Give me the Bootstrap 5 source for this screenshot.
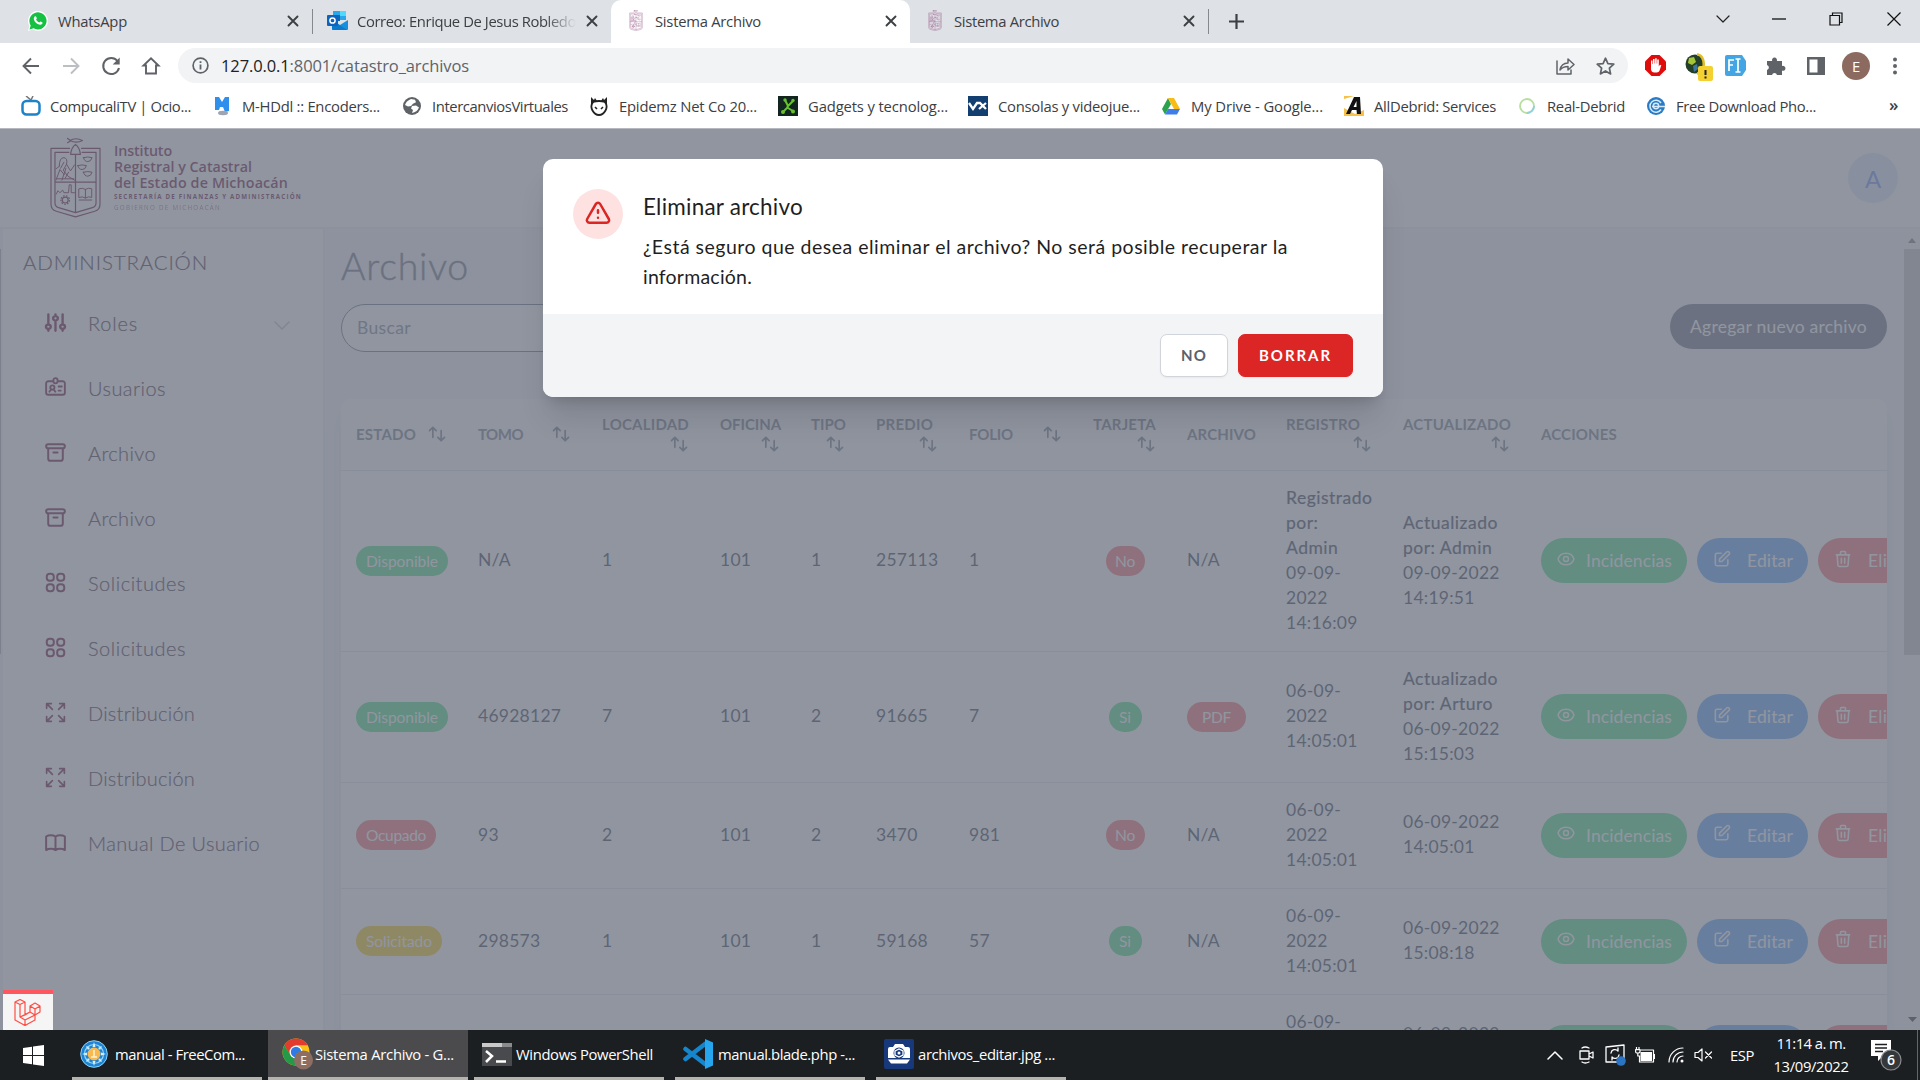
<!DOCTYPE html>
<html lang="es">
<head>
<meta charset="utf-8">
<title>Sistema Archivo</title>
<link href="https://cdn.jsdelivr.net/npm/bootstrap@5.3.0/dist/css/bootstrap.min.css" rel="stylesheet">
<style>
  :root { --ui: "Open Sans", "Noto Sans", sans-serif; --app: Lato, "Open Sans", sans-serif; --rojo: #6e1240; }
  body { width: 1920px; height: 1080px; overflow: hidden; background: #fff; font-family: var(--ui); font-size: 14.8px; line-height: 20px; color: #3c4043; }
  svg { flex: none; display: block; }
  [data-w] { white-space: nowrap; display: inline-block; flex: none; }
  .slot { flex: none; display: flex; align-items: center; }
  .ln { fill: none; stroke: currentColor; stroke-linecap: round; stroke-linejoin: round; }

  /* browser chrome */
  .tabstrip { height: 43px; background: #dee1e6; color: #3c4043; }
  .tabstrip .tab-item { height: 43px; padding-bottom: 2px; flex: none; display: flex; align-items: center; position: relative; }
  .tab-item.current { background: #fff; border-radius: 10px 10px 0 0; }
  .tab-sep { width: 1px; height: 25px; background: #85898e; flex: none; }
  .fade-end { -webkit-mask-image: linear-gradient(90deg, #000 86%, transparent); mask-image: linear-gradient(90deg, #000 86%, transparent); overflow: hidden; }
  .toolbar { height: 45px; color: #5f6368; }
  .omnibox { width: 1450px; height: 35px; border-radius: 18px; background: #f1f3f4; font-size: 16.5px; color: #606469; }
  .omnibox b { font-weight: 400; color: #202124; }
  .bookmarks { height: 41px; border-bottom: 1px solid #b5b8bf; padding-bottom: 4px; }

  /* web application */
  .viewport { height: 901px; font-family: var(--app); font-size: 17.5px; line-height: 25px; color: #374151; background: #f3f4f6; position: relative; overflow: hidden; }
  .app-header { height: 100px; background: #fff; border-bottom: 2px solid #eceef1; padding-left: 50px; color: var(--rojo); }
  .brand-lines { font-family: "Open Sans", sans-serif; font-weight: 600; font-size: 14.3px; line-height: 16px; }
  .tiny-a { font-size: 6.2px; line-height: 12px; font-weight: 700; }
  .tiny-b { font-size: 6.2px; line-height: 10px; font-weight: 400; opacity: .6; }
  .user-dot { width: 50px; height: 50px; background: #dfecff; color: #6f8ff0; font-size: 24px; }
  .sidebar { width: 322px; margin-left: 3px; background: #fff; border-right: 2px solid #eceef1; padding: 21px 0 0 20px; color: #452a3c; font-weight: 300; font-size: 20px; -webkit-text-stroke: .2px currentColor; }
  .side-item { height: 65px; }
  .side-item svg { color: var(--rojo); margin: -3px 20px 0 0; }
  .side-list { padding: 16px 0 0 20px; }
  .page-body { width: 1579px; padding: 14px 17px 0 16px; flex: none; }
  .page-title { font-size: 37.5px; line-height: 45px; color: #6b7280; font-weight: 300; height: 61px; margin: 0; -webkit-text-stroke: .5px currentColor; }
  .search-pill { width: 420px; height: 48px; border: 1px solid #6b7280; background: #fff; padding: 0 15px 2px; color: #7d838e; }
  .add-pill { width: 217px; height: 45px; background: #6b7280; color: #fff; padding-bottom: 1px; }
  .sheet { margin-top: 47px; width: 1546px; background: #fff; border-radius: 10px 10px 0 0; overflow: hidden; box-shadow: 0 12px 19px -4px rgba(0,0,0,.1); }
  .sheet table { width: 1720px; table-layout: fixed; border-collapse: collapse; }
  .sheet th { height: 71px; padding: 0 15px 1px; background: #f9fafb; font-size: 15px; line-height: 20px; font-weight: 700; color: #757c89; border-bottom: 1px solid #dfe2e6; vertical-align: middle; }
  .sheet td { padding: 15px; border-bottom: 1px solid #e2e4e8; vertical-align: middle; white-space: nowrap; }
  .sheet td.plain { padding: 14px 15px 16px; letter-spacing: .25px; }
  .strong-txt { -webkit-text-stroke: .22px currentColor; letter-spacing: .5px; }
  .pill { display: inline-flex; align-items: center; justify-content: center; height: 30px; border-radius: 15px; color: #fff; font-size: 15.5px; line-height: 22px; vertical-align: middle; }
  .g { background: #4ade80; } .r { background: #f87171; } .y { background: #facc15; } .b { background: #60a5fa; }
  .act { height: 45px; border-radius: 23px; color: #fff; flex: none; display: flex; align-items: center; }
  .act svg { margin-top: -4px; }
  .track { width: 16px; background: #f1f1f1; color: #505050; }
  .thumb { height: 406px; background: #c1c1c1; }
  .veil { position: absolute; inset: 0; background: rgba(107,114,128,.75); }
  .dialog-box { position: absolute; left: 543px; top: 30px; width: 840px; height: 238px; border-radius: 10px; background: #fff; overflow: hidden; color: #1f1f1f; }
  .dialog-shadow { position: absolute; left: 543px; top: 30px; width: 840px; height: 238px; border-radius: 10px; box-shadow: 0 25px 31px -6px rgba(0,0,0,.12), 0 10px 12px -6px rgba(0,0,0,.12); }
  .dialog-main { height: 155px; padding: 30px; gap: 20px; }
  .warn-dot { width: 50px; height: 50px; background: #fee2e2; color: #dc2626; }
  .dialog-foot { height: 83px; background: #f3f4f6; padding: 0 30px; gap: 10px; }
  .dlg-btn { height: 43px; border-radius: 7px; font-size: 15px; font-weight: 700; border: 1px solid #d1d5db; background: #fff; color: #59616e; display: flex; align-items: center; justify-content: center; box-shadow: 0 1px 2px rgba(0,0,0,.05); }
  .dlg-btn.danger { background: #dc2626; border-color: #dc2626; color: #fff; }
  .debug-tab { position: absolute; left: 3px; bottom: 0; width: 50px; height: 40px; background: #f5f5f5; border-top: 4px solid #ff5660; padding-right: 2px; }
  .left-line { position: absolute; left: 0; top: 120px; width: 1px; height: 405px; background: #7b808b; }

  /* taskbar */
  .taskbar { height: 50px; background: #1c1f22; color: #fff; }
  .task { height: 50px; border-bottom: 3px solid #b5b3ae; padding-top: 1px; flex: none; display: flex; align-items: center; }
  .task.on { background: #4b4b4e; }
</style>
</head>
<body>
<svg width="0" height="0" class="position-absolute">
  <symbol id="x" viewBox="0 0 12 12"><path class="ln" stroke-width="1.9" d="M1.5 1.5l9 9m0-9l-9 9"/></symbol>
  <symbol id="crest" viewBox="148 36 154 244"><g class="ln" stroke-width="3.6"><path d="M207 70H151V238Q151 256 167 260L225 277L283 260Q299 256 299 238V70H243M205 82H163V234Q163 246 174 249L225 264L276 249Q287 246 287 234V82H245M225 90V262M163 172H287M210 88H240Q237 66 225 58Q213 66 210 88ZM201 40L211 47L201 53M208 46Q226 36 246 46Q228 56 208 46Z"/><path stroke-width="3" d="M249 98q13-4 26 0q-3 12-13 12t-13-12zM232 122q13-4 26 0q-3 12-13 12t-13-12zM249 142q13-4 26 0q-3 12-13 12t-13-12zM166 166L178 134L190 148L184 166M176 124Q176 98 190 98Q202 100 198 118L188 136L202 154L222 166M198 118L210 138L222 120M190 112L180 130M196 130L190 150M204 142L194 160M166 132l10-8M170 162h50M167 208L172 198l6 6l8-8l4 8h14l2-24h6v24h10M236 192q10-4 19 2q9-6 19-2v26q-10-4-19 2q-9-6-19-2zM255 194v26M236 226h38"/><circle cx="194" cy="226" r="9"/><path stroke-dasharray="2 7" d="M181 226a13 13 0 1 0 26 0a13 13 0 1 0-26 0"/></g></symbol>
  <symbol id="sort" viewBox="0 0 24 24"><path class="ln" stroke-width="2" d="M7 16V4m0 0L3 8m4-4l4 4m6 0v12m0 0l4-4m-4 4l-4-4"/></symbol>
  <symbol id="sliders" viewBox="0 0 24 24"><path class="ln" stroke-width="2" d="M12 6V4m0 2a2 2 0 100 4m0-4a2 2 0 110 4m-6 8a2 2 0 100-4m0 4a2 2 0 110-4m0 4v2m0-6V4m6 6v10m6-2a2 2 0 100-4m0 4a2 2 0 110-4m0 4v2m0-6V4" transform="translate(-1.7 0) scale(1.14 1)"/></symbol>
  <symbol id="ident" viewBox="0 0 24 24"><path class="ln" stroke-width="1.8" d="M10 6H5a2 2 0 00-2 2v9a2 2 0 002 2h14a2 2 0 002-2V8a2 2 0 00-2-2h-5m-4 0V5a2 2 0 114 0v1m-4 0a2 2 0 104 0m-5 8a2 2 0 100-4 2 2 0 000 4zm0 0c1.306 0 2.417.835 2.83 2M9 14a3.001 3.001 0 00-2.83 2M15 11h3m-3 4h2"/></symbol>
  <symbol id="box" viewBox="0 0 24 24"><path class="ln" stroke-width="1.9" d="M5 8h14M5 8a2 2 0 110-4h14a2 2 0 110 4M5 8v10a2 2 0 002 2h10a2 2 0 002-2V8m-9 4h4"/></symbol>
  <symbol id="dots4" viewBox="0 0 24 24"><g class="ln" stroke-width="1.9"><rect x="3.6" y="3.6" width="6.8" height="6.8" rx="2.9"/><rect x="13.6" y="3.6" width="6.8" height="6.8" rx="2.9"/><rect x="3.6" y="13.6" width="6.8" height="6.8" rx="2.9"/><rect x="13.6" y="13.6" width="6.8" height="6.8" rx="2.9"/></g></symbol>
  <symbol id="expand" viewBox="0 0 24 24"><path class="ln" stroke-width="1.6" d="M3.5 8V3.5H8M3.5 3.5l5.5 5.5M20.500 8V3.500H16M20.500 3.500L15 9M3.500 16v4.500H8M3.500 20.500L9 15M20.500 16v4.500H16M20.500 20.500L15 15"/></symbol>
  <symbol id="book" viewBox="0 0 24 24"><path class="ln" stroke-width="1.9" d="M12 6.253v13m0-13C10.832 5.477 9.246 5 7.5 5S4.168 5.477 3 6.253v13C4.168 18.477 5.754 18 7.5 18s3.332.477 4.500 1.253m0-13C13.168 5.477 14.754 5 16.500 5c1.747 0 3.332.477 4.500 1.253v13C19.832 18.477 18.247 18 16.500 18c-1.746 0-3.332.477-4.500 1.253"/></symbol>
  <symbol id="eye" viewBox="0 0 24 24"><path class="ln" stroke-width="1.8" d="M15 12a3 3 0 11-6 0 3 3 0 016 0zM2.458 12C3.732 7.943 7.523 5 12 5c4.478 0 8.268 2.943 9.542 7-1.274 4.057-5.064 7-9.542 7-4.477 0-8.268-2.943-9.542-7z"/></symbol>
  <symbol id="edit" viewBox="0 0 24 24"><path class="ln" stroke-width="1.900" d="M11 5H6a2 2 0 00-2 2v11a2 2 0 002 2h11a2 2 0 002-2v-5m-1.414-9.414a2 2 0 112.828 2.828L11.828 15H9v-2.828l8.586-8.586z"/></symbol>
  <symbol id="trash" viewBox="0 0 24 24"><path class="ln" stroke-width="1.900" d="M19 7l-.867 12.142A2 2 0 0116.138 21H7.862a2 2 0 01-1.995-1.858L5 7m5 4v6m4-6v6m1-10V4a1 1 0 00-1-1h-4a1 1 0 00-1 1v3M4 7h16"/></symbol>
</svg>

<!-- tab strip -->
<div class="tabstrip d-flex align-items-start">
  <div class="tab-item" style="width:312px">
    <div class="slot" style="width:58px;padding-left:28px"><svg width="20" height="20" viewBox="0 0 20 20"><path fill="#fff" d="M0 20l1.400-5A10 10 0 1 1 5 18.600z"/><path fill="#15c143" d="M1.500 18.500l1.200-4A8.600 8.600 0 1 1 5.600 17.300z"/><path fill="#fff" d="M7 5.300c.6-.3 1 0 1.200.5l.6 1.400c.1.400-.6 1-.7 1.300.6 1.300 1.800 2.400 3.200 3 .5-.1.900-1.100 1.300-1l1.600.8c.5.300.3 1.200-.1 1.700-1 1.100-2.700.9-4.400 0C7.500 11.800 6 9.700 5.800 8c0-1.200.5-2.300 1.200-2.700z"/></svg></div>
    <span data-w="69">WhatsApp</span>
    <div class="slot ms-auto" style="width:25px"><svg width="12" height="12"><use href="#x"/></svg></div>
  </div>
  <div class="slot" style="height:42px"><div class="tab-sep"></div></div>
  <div class="tab-item" style="width:298px">
    <div class="slot" style="width:44px;padding-left:14px"><svg width="21" height="19" viewBox="0 0 21 19"><path fill="#28a8ea" d="M6 0h13v9H6z"/><path fill="#1066b5" d="M6 4h7v6H6z"/><path fill="#50d9ff" d="M13 0h6v5h-6z"/><path fill="#1490df" d="M5 9l8 5 8-5v9a1 1 0 0 1-1 1H6a1 1 0 0 1-1-1z"/><path fill="#0364b8" d="M5 9l15 10H6a1 1 0 0 1-1-1z" opacity=".5"/><rect y="4" width="11" height="11" rx="1" fill="#0a64c0"/><circle cx="5.500" cy="9.500" r="2.600" fill="none" stroke="#fff" stroke-width="1.500"/></svg></div>
    <span class="fade-end" data-w="219">Correo: Enrique De Jesus Robledo</span>
    <div class="slot ms-auto" style="width:25px"><svg width="12" height="12"><use href="#x"/></svg></div>
  </div>
  <div class="tab-item current" style="width:299px">
    <div class="slot" style="width:44px;padding-left:18px;color:#8f4a7c"><svg width="14" height="21"><use href="#crest"/></svg></div>
    <span data-w="106">Sistema Archivo</span>
    <div class="slot ms-auto" style="width:25px"><svg width="12" height="12"><use href="#x"/></svg></div>
  </div>
  <div class="tab-item" style="width:298px">
    <div class="slot" style="width:44px;padding-left:18px;color:#8f4a7c"><svg width="14" height="21"><use href="#crest"/></svg></div>
    <span data-w="105">Sistema Archivo</span>
    <div class="slot ms-auto" style="width:25px"><svg width="12" height="12"><use href="#x"/></svg></div>
  </div>
  <div class="slot" style="height:42px"><div class="tab-sep"></div></div>
  <div class="slot" style="height:42px;padding-left:20px"><svg width="15" height="15" viewBox="0 0 15 15"><path d="M7.500 0v15M0 7.500h15" stroke="#3c4043" stroke-width="2.200"/></svg></div>
  <div class="d-flex ms-auto align-items-center" style="height:37px;padding-right:19px;color:#222">
    <div class="slot" style="width:56px"><svg width="14" height="8" viewBox="0 0 14 8"><path class="ln" stroke-width="1.200" d="M1 1l6 6 6-6"/></svg></div>
    <div class="slot" style="width:57px"><svg width="14" height="2"><path d="M0 1h14" stroke="#111" stroke-width="1.300"/></svg></div>
    <div class="slot" style="width:58px"><svg width="14" height="14" viewBox="0 0 14 14"><path fill="none" stroke="#111" stroke-width="1.200" d="M1 3.500h9.500V13H1zM3.500 3.500V1H13v9.500h-2.500"/></svg></div>
    <div class="slot"><svg width="14" height="14" viewBox="0 0 14 14"><path stroke="#111" stroke-width="1.200" d="M.5 .5l13 13M13.500 .5l-13 13"/></svg></div>
  </div>
</div>

<!-- toolbar -->
<div class="toolbar d-flex align-items-center">
  <div class="slot" style="width:178px;padding-left:21px;gap:20px">
    <svg width="20" height="20" viewBox="0 0 20 20"><path fill="none" stroke="#5f6368" stroke-width="1.900" d="M18 10H3M10 2.500L2.500 10l7.500 7.500"/></svg>
    <svg width="20" height="20" viewBox="0 0 20 20"><path fill="none" stroke="#bcbec1" stroke-width="1.900" d="M2 10h15M10 2.500l7.500 7.500-7.500 7.500"/></svg>
    <svg width="20" height="20" viewBox="0 0 20 20"><path fill="none" stroke="#5f6368" stroke-width="2" d="M16.500 5A8 8 0 1 0 18 12"/><path fill="#5f6368" d="M18.700 1.500v7h-7z"/></svg>
    <svg width="20" height="20" viewBox="0 0 20 20"><path fill="none" stroke="#5f6368" stroke-width="1.900" d="M5 17.500V9.500H2.500L10 2.300l7.500 7.200H15v8z"/></svg>
  </div>
  <div class="omnibox d-flex align-items-center">
    <div class="slot" style="width:43px;padding-left:14px"><svg width="17" height="17" viewBox="0 0 17 17"><circle cx="8.500" cy="8.500" r="7.400" fill="none" stroke="#5f6368" stroke-width="1.700"/><path stroke="#5f6368" stroke-width="1.800" d="M8.500 7.500v5M8.500 4.300v1.800"/></svg></div>
    <span data-w="248"><b>127.0.0.1</b>:8001/catastro_archivos</span>
    <div class="slot ms-auto" style="padding-right:13px;gap:21px">
      <svg width="19" height="18" viewBox="0 0 19 18"><path class="ln" stroke-width="1.500" d="M1 4v13h14v-4M4 13c1-5 4-7 8-7V2l6 5.500-6 5.500V9.500c-4 0-6 1-8 3.500z"/></svg>
      <svg width="19" height="18" viewBox="0 0 19 18"><path class="ln" stroke-width="1.700" d="M9.500 1.200l2.400 5.400 5.900.6-4.400 4 1.200 5.700-5.100-3-5.100 3 1.200-5.700-4.400-4 5.900-.6z"/></svg>
    </div>
  </div>
  <div class="d-flex align-items-center" style="padding-left:17px">
    <div class="slot" style="width:40px"><svg width="21" height="21" viewBox="0 0 21 21"><path fill="#e00b0b" d="M6.500 0h8L21 6.500v8L14.500 21h-8L0 14.500v-8z"/><path fill="#fff" d="M6 10.500V5.600h1.500V9h.5V4h1.600v4.500h.5V3.300h1.600v5.200h.5V4.400h1.600v7.100l1-1.800 1.500.6-1.800 5.500q-.7 1.700-2.700 1.700h-2.500q-2.800 0-3.300-3z"/></svg></div>
    <div class="slot" style="width:40px"><svg width="28" height="30" viewBox="0 0 28 30"><circle cx="10" cy="13" r="9.500" fill="#243f27"/><path d="M12 3.500c9 0 9 19 0 19" fill="none" stroke="#e1bd2a" stroke-width="2.500"/><path fill="#a5c63a" d="M4 7l5-1 2 5-4 3-4-2z"/><path fill="#3d77a1" d="M8 15l4-2 1 5-4 3z"/><rect x="13" y="15" width="15" height="15" rx="2" fill="#f4d030"/><path d="M20.500 19v5M20.500 25.500v2" stroke="#222" stroke-width="2"/></svg></div>
    <div class="slot" style="width:41px"><svg width="21" height="21" viewBox="0 0 21 21"><path fill="#43a5e3" d="M2 0h15l4 6v9l-4 6H2q-2 0-2-2V2q0-2 2-2z"/><path fill="none" stroke="#fff" stroke-width="1.700" d="M4 16V5h5M4 10h4M10.500 4h5M10.500 17h5M13 4v13"/></svg></div>
    <div class="slot" style="width:41px"><svg width="20" height="19" viewBox="0 0 20 19"><path fill="#5f6368" d="M1 5h5.200a2.500 2.500 0 1 1 4.600 0H16v5a2.500 2.500 0 1 1 0 4.600V19h-5a2.600 2.600 0 0 0-5 0H1v-5a2.600 2.600 0 0 0 0-5z"/></svg></div>
    <div class="slot" style="width:35px"><svg width="18" height="18" viewBox="0 0 18 18"><path fill="#5f6368" fill-rule="evenodd" d="M0 0h18v18H0zM2.500 2.500v13h8v-13z"/></svg></div>
    <div class="slot justify-content-center rounded-circle text-white" style="width:28px;height:28px;background:#8d6a60">E</div>
    <div class="slot" style="padding-left:23px"><svg width="4" height="18" fill="#5f6368"><circle cx="2" cy="2.500" r="2"/><circle cx="2" cy="9" r="2"/><circle cx="2" cy="15.500" r="2"/></svg></div>
  </div>
</div>

<!-- bookmarks -->
<div class="bookmarks d-flex align-items-center" style="padding-left:21px">
  <div class="slot" style="width:194px"><div class="slot" style="width:29px"><svg width="20" height="20" viewBox="0 0 20 20"><path d="M5 0l5 4 2-4" fill="none" stroke="#777" stroke-width="1.500"/><rect x="1.500" y="5" width="17" height="13.500" rx="4" fill="#fff" stroke="#1d83c9" stroke-width="2.500"/></svg></div><span data-w="141">CompucaliTV | Ocio...</span></div>
  <div class="slot" style="width:188px"><div class="slot" style="width:27px"><svg width="14" height="20" viewBox="0 0 14 20"><path fill="#2e8fec" d="M0 1l4 0 3 5 3-5h4v14l-4 1-2-5H5l-1 3H0z"/><ellipse cx="8" cy="17" rx="5" ry="2.200" fill="#9da5b3"/></svg></div><span data-w="138">M-HDdl :: Encoders...</span></div>
  <div class="slot" style="width:187px"><div class="slot" style="width:29px"><svg width="18" height="18" viewBox="0 0 18 18"><circle cx="9" cy="9" r="9" fill="#5f6368"/><path fill="#fff" d="M8 2l4 .8 1 2.500-3 1.500-2 2.200-3 .5L2 8Q3 4 8 2zM9 9l4-.5 3 2Q14 15 9 16l1-3-2-1.500z"/></svg></div><span data-w="136">IntercanviosVirtuales</span></div>
  <div class="slot" style="width:188px"><div class="slot" style="width:29px"><svg width="18" height="19" viewBox="0 0 18 19"><path fill="#fff" stroke="#222" stroke-width="1.800" d="M3 5Q0 9 2.500 13.500Q5 18 9 18t6.500-4.500Q18 9 15 5Q9 3 3 5z"/><path fill="#222" d="M1 0l3 3 1-2 2 3h4l2-3 1 2 3-3 0 9-3-4H4L1 9z"/><path stroke="#222" stroke-width="1.600" d="M5 10l2 2M13 10l-2 2"/></svg></div><span data-w="138">Epidemz Net Co 20...</span></div>
  <div class="slot" style="width:190px"><div class="slot" style="width:30px"><svg width="20" height="20" viewBox="0 0 20 20"><path fill="#12261f" d="M0 0h20v20H0z"/><path fill="none" stroke="#67c22f" stroke-width="2" d="M7 4l3 6 5-5M10 10l-1 2-4 4M10 12l5 3"/><g fill="#67c22f"><circle cx="7" cy="4" r="1.700"/><circle cx="15" cy="4.500" r="1.700"/><circle cx="5" cy="16" r="2"/><circle cx="15" cy="15.500" r="2"/></g></svg></div><span data-w="140">Gadgets y tecnolog...</span></div>
  <div class="slot" style="width:194px"><div class="slot" style="width:30px"><svg width="20" height="20" viewBox="0 0 20 20"><path fill="#123f70" d="M0 0h20v20H0z"/><path fill="none" stroke="#fff" stroke-width="2.300" d="M1 7l4 6 4-6h3l6 6M18 7l-7 6"/></svg></div><span data-w="142">Consolas y videojue...</span></div>
  <div class="slot" style="width:182px"><div class="slot" style="width:29px"><svg width="18" height="17" viewBox="0 0 18 17"><path fill="#2ba24c" d="M6 0L0 11l3 5.500L9 6z"/><path fill="#f9bc15" d="M6 0h6l6 11h-6z"/><path fill="#3f7ee8" d="M3 16.500L6 11h12l-3 5.500z"/></svg></div><span data-w="132">My Drive - Google...</span></div>
  <div class="slot" style="width:175px"><div class="slot" style="width:30px"><svg width="20" height="20" viewBox="0 0 20 20"><path fill="#f3c14c" d="M0 0h20v20H0z"/><path fill="#fff" d="M0 3l10-3h10v14l-9 4L0 12z"/><path fill="#111" d="M2 18L10 1h6l1 17h-4l-.5-4H8l-2 4zM9.500 11h3V5z"/></svg></div><span data-w="122">AllDebrid: Services</span></div>
  <div class="slot" style="width:127px"><div class="slot" style="width:28px"><svg width="16" height="18" viewBox="0 0 16 18"><circle cx="8" cy="9" r="7" fill="none" stroke="#b7dfa1" stroke-width="1.800"/><path d="M8 16a7 7 0 0 0 7-7" fill="none" stroke="#8ed0df" stroke-width="1.800"/></svg></div><span data-w="78">Real-Debrid</span></div>
  <div class="slot" style="width:243px"><div class="slot" style="width:30px"><svg width="20" height="18" viewBox="0 0 20 18"><circle cx="10" cy="9" r="9" fill="#2a7bc5"/><path fill="none" stroke="#d5ebfa" stroke-width="1.500" d="M15 6a6 6 0 1 0 0 6.500M6 9.500h13"/><circle cx="10" cy="9" r="2.700" fill="none" stroke="#d5ebfa" stroke-width="1.500"/></svg></div><span data-w="140">Free Download Pho...</span></div>
  <span class="fw-semibold" style="font-size:17px;margin-top:-3px">»</span>
</div>

<!-- web page -->
<div class="viewport">
  <header class="app-header d-flex align-items-center">
    <svg width="51" height="81" style="margin-top:-2px"><use href="#crest"/></svg>
    <div class="brand-lines" style="padding-left:13px">
      <div><span data-w="58">Instituto</span></div><div><span data-w="138">Registral y Catastral</span></div><div><span data-w="174">del Estado de Michoacán</span></div>
      <div class="tiny-a"><span data-w="188">SECRETARÍA DE FINANZAS Y ADMINISTRACIÓN</span></div><div class="tiny-b"><span data-w="107">GOBIERNO DE MICHOACÁN</span></div>
    </div>
    <div class="user-dot rounded-circle d-flex align-items-center justify-content-center ms-auto" style="margin-right:22px">A</div>
  </header>
  <div class="d-flex" style="height:801px">
    <aside class="sidebar flex-shrink-0">
      <div style="font-size:20.500px"><span data-w="185">ADMINISTRACIÓN</span></div>
      <div class="side-list">
        <div class="side-item d-flex align-items-center"><svg width="25" height="25"><use href="#sliders"/></svg><span data-w="50">Roles</span><svg class="ms-auto" style="color:#bfc0c8;margin:4px 33px 0 0" width="16" height="9" viewBox="0 0 16 9"><path class="ln" stroke-width="1.500" d="M1 1l7 7 7-7"/></svg></div>
        <div class="side-item d-flex align-items-center"><svg width="25" height="25"><use href="#ident"/></svg><span data-w="78">Usuarios</span></div>
        <div class="side-item d-flex align-items-center"><svg width="25" height="25"><use href="#box"/></svg><span data-w="68">Archivo</span></div>
        <div class="side-item d-flex align-items-center"><svg width="25" height="25"><use href="#box"/></svg><span data-w="68">Archivo</span></div>
        <div class="side-item d-flex align-items-center"><svg width="25" height="25"><use href="#dots4"/></svg><span data-w="98">Solicitudes</span></div>
        <div class="side-item d-flex align-items-center"><svg width="25" height="25"><use href="#dots4"/></svg><span data-w="98">Solicitudes</span></div>
        <div class="side-item d-flex align-items-center"><svg width="25" height="25"><use href="#expand"/></svg><span data-w="107">Distribución</span></div>
        <div class="side-item d-flex align-items-center"><svg width="25" height="25"><use href="#expand"/></svg><span data-w="107">Distribución</span></div>
        <div class="side-item d-flex align-items-center"><svg width="25" height="25"><use href="#book"/></svg><span data-w="172">Manual De Usuario</span></div>
      </div>
    </aside>
    <main class="page-body">
      <h1 class="page-title"><span data-w="128">Archivo</span></h1>
      <div class="d-flex justify-content-between align-items-start">
        <div class="search-pill rounded-pill d-flex align-items-center"><span data-w="54">Buscar</span></div>
        <div class="add-pill rounded-pill d-flex align-items-center justify-content-center"><span data-w="177">Agregar nuevo archivo</span></div>
      </div>
      <div class="sheet">
        <table>
          <colgroup><col style="width:122px"><col style="width:124px"><col style="width:118px"><col style="width:91px"><col style="width:65px"><col style="width:93px"><col style="width:124px"><col style="width:94px"><col style="width:99px"><col style="width:117px"><col style="width:138px"><col></colgroup>
          <thead><tr id="heads"></tr></thead>
          <tbody id="rows"></tbody>
        </table>
      </div>
    </main>
    <div class="track d-flex flex-column flex-shrink-0">
      <div style="height:20px;padding:9px 0 0 4px"><svg width="8" height="5"><path fill="#777" d="M0 5l4-5 4 5z"/></svg></div>
      <div class="thumb"></div>
      <div class="mt-auto" style="padding:0 0 8px 4px"><svg width="9" height="5"><path fill="#333" d="M0 0h9L4.500 5z"/></svg></div>
    </div>
  </div>
  <div class="veil"></div>
  <div class="left-line"></div>
  <div class="dialog-shadow"></div>
  <div class="dialog-box">
    <div class="dialog-main d-flex">
      <div class="warn-dot rounded-circle d-flex align-items-center justify-content-center flex-shrink-0"><svg width="30" height="30" viewBox="0 0 24 24"><path class="ln" stroke-width="2" d="M12 9v2m0 4h.01m-6.938 4h13.856c1.540 0 2.502-1.667 1.732-3L13.732 4c-.77-1.333-2.694-1.333-3.464 0L3.340 16c-.77 1.333.192 3 1.732 3z"/></svg></div>
      <div>
        <div style="font-size:22.500px;line-height:35px"><span data-w="160">Eliminar archivo</span></div>
        <div style="font-size:19.500px;line-height:30px;padding-top:8px"><span data-w="645">¿Está seguro que desea eliminar el archivo? No será posible recuperar la</span><br><span data-w="109">información.</span></div>
      </div>
    </div>
    <div class="dialog-foot d-flex align-items-center justify-content-end">
      <div class="dlg-btn" style="width:68px"><span data-w="26">NO</span></div>
      <div class="dlg-btn danger" style="width:115px"><span data-w="73">BORRAR</span></div>
    </div>
  </div>
  <div class="debug-tab d-flex justify-content-center align-items-center"><svg width="27" height="27" viewBox="0 0 27 27"><path fill="none" stroke="#ff4d44" stroke-width="1.200" stroke-linejoin="round" d="M1 3l5-2.500L11 3v13l5-3V7l5-3 5 3v6l-5 3v5l-10 5.500L1 21zM1 3l5 2.500L11 3M6 5.500V18l5 3 10-5M16 7l5 3 5-3M21 10v6M6 18l5-2M16 13l5 3M11 21v5.500M6 18l10-5"/></svg></div>
</div>

<!-- taskbar -->
<div class="taskbar d-flex">
  <div class="slot" style="width:72px;padding-left:23px"><svg width="21" height="21" viewBox="0 0 21 21" fill="#fff"><path d="M0 3l9-1.300V10H0zM10 1.500L21 0v10H10zM0 11h9v8.300L0 18zM10 11h11v10l-11-1.500z"/></svg></div>
  <div class="task" style="width:190px;padding-left:8px"><div class="slot" style="width:35px"><svg width="28" height="28" viewBox="0 0 28 28"><circle cx="14" cy="14" r="13.300" fill="#1d83d4" stroke="#8bd2f7"/><circle cx="14" cy="14" r="9.500" fill="none" stroke="#9ad7f8" stroke-width="1.200"/><path fill="#d3effc" d="M14 2l1.500 5h-3zM14 26l1.500-5h-3zM2 14l5-1.500v3zM26 14l-5-1.500v3zM6 6l4 2-2 2zM22 6l-4 2 2 2zM6 22l4-2-2-2zM22 22l-4-2 2-2z"/><circle cx="14" cy="14" r="6.500" fill="#f9b950"/><path d="M14 10v7M11 17h6" stroke="#fff3d0" stroke-width="1.500"/></svg></div><span data-w="130">manual - FreeCom...</span></div>
  <div class="task on" style="width:200px;margin-left:6px;padding-left:14px"><div class="slot" style="width:33px"><svg width="31" height="32" viewBox="0 0 31 32"><circle cx="14" cy="14" r="13.500" fill="#fbc116"/><path fill="#e33b2e" d="M2.300 7.300A13.500 13.500 0 0 1 25.700 7.300H14L8 17z"/><path fill="#229a48" d="M2.300 7.300L9 18l8 2-4 7.500A13.500 13.500 0 0 1 2.300 7.300z"/><circle cx="14" cy="14" r="6.500" fill="#fff"/><circle cx="14" cy="14" r="5.200" fill="#2f7be5"/><circle cx="21.500" cy="22" r="9.500" fill="#8d6e63"/><text x="21.500" y="26.500" fill="#fff" font-family="Open Sans, sans-serif" font-size="12" text-anchor="middle">E</text></svg></div><span data-w="139">Sistema Archivo - G...</span></div>
  <div class="task" style="width:190px;margin-left:6px;padding-left:8px"><div class="slot" style="width:34px"><svg width="30" height="23" viewBox="0 0 30 23"><path fill="#484a4d" d="M0 0h30v23H0z"/><path fill="#c9c9c9" d="M0 0h30v4H0z"/><path fill="#8a8b8d" d="M20 0h10v4H20z"/><path fill="none" stroke="#fff" stroke-width="2.500" d="M4 8l6 5-6 6M14 18.500h10"/></svg></div><span data-w="137">Windows PowerShell</span></div>
  <div class="task" style="width:190px;margin-left:11px;padding-left:8px"><div class="slot" style="width:35px"><svg width="30" height="30" viewBox="0 0 30 30"><path fill="none" stroke="#1585cc" stroke-width="4.500" stroke-linecap="round" stroke-linejoin="round" d="M2.500 10L22 25M2.500 20L22 5"/><path fill="#27a6f0" d="M22 0l8 3.500v23L22 30z"/></svg></div><span data-w="137">manual.blade.php -...</span></div>
  <div class="task" style="width:190px;margin-left:11px;padding-left:8px"><div class="slot" style="width:34px"><svg width="30" height="30" viewBox="0 0 30 30"><rect width="30" height="30" rx="2" fill="#18387c"/><path fill="#fff" d="M6 8h3l2-3h8l2 3h3q2 0 2 2v9H4v-9q0-2 2-2zM4 20.500h22l-3 4H7z"/><circle cx="15" cy="14" r="5.500" fill="#18387c"/><path d="M11 12l4-2 4 2v4l-4 2-4-2z" fill="none" stroke="#fff" stroke-width="1.300"/><circle cx="15" cy="14" r="1.500" fill="#fff"/></svg></div><span data-w="137">archivos_editar.jpg ...</span></div>
  <div class="d-flex ms-auto align-items-center flex-shrink-0" style="width:373px">
    <div class="slot" style="width:32px"><svg width="16" height="9" viewBox="0 0 16 9"><path class="ln" stroke-width="1.500" d="M1 8l7-7 7 7"/></svg></div>
    <div class="slot" style="width:26px"><svg width="15" height="18" viewBox="0 0 15 18"><path class="ln" stroke-width="1.300" d="M1 5h9v8H1zM10 8l4-2v6l-4-2M3 2q3-2 7 0M3 16q3 2 7 0"/></svg></div>
    <div class="slot" style="width:30px"><svg width="21" height="22" viewBox="0 0 21 22"><path class="ln" stroke-width="1.300" d="M1 3l18-2v17H1zM6 9a4 4 0 0 1 7-2V4M14 11a4 4 0 0 1-7 2v3"/><circle cx="16" cy="17" r="4.800" fill="#2b74c4"/></svg></div>
    <div class="slot" style="width:33px"><svg width="20" height="16" viewBox="0 0 20 16"><path fill="#fff" d="M5.500 5h11.500v9H5.500zM19 7h1v5h-1z"/><path class="ln" stroke-width="1.200" d="M6 3h12.500v12H4.500V9M1.500 0v2M4 0v2M.600 2.600h4.400v2q0 1.500-2.200 1.500T.6 4.600zM2.800 6v3h2"/></svg></div>
    <div class="slot" style="width:26px"><svg width="16" height="16" viewBox="0 0 16 16"><path class="ln" stroke-width="1.200" d="M1 15A14 14 0 0 1 15 1M5 15A10 10 0 0 1 15 5M9 15A6 6 0 0 1 15 9"/><circle cx="14" cy="14" r="1.500" fill="#fff"/></svg></div>
    <div class="slot" style="width:36px"><svg width="19" height="14" viewBox="0 0 19 14"><path class="ln" stroke-width="1.200" d="M1 4.500h3L8 1v12L4 9.500H1zM11.500 4l6 6M17.500 4l-6 6"/></svg></div>
    <div class="slot" style="width:43px"><span data-w="24">ESP</span></div>
    <div class="d-flex flex-column align-items-center justify-content-center" style="width:76px;line-height:23px"><span data-w="69">11:14 a. m.</span><span data-w="75">13/09/2022</span></div>
    <div class="slot" style="padding-left:22px"><svg width="33" height="40" viewBox="0 0 33 40"><path fill="#fff" d="M0 5h20v16h-8l-5 5v-5H0z"/><path stroke="#1c1f22" stroke-width="1.500" d="M4 9.500h12M4 13h12M4 16.500h8"/><circle cx="20" cy="25" r="10" fill="#34383a" stroke="#898b8d" stroke-width="1.200"/><text x="20" y="30" fill="#fff" font-family="Open Sans, sans-serif" font-size="14" font-weight="600" text-anchor="middle">6</text></svg></div>
    <div class="ms-auto" style="width:1px;height:50px;background:#666;margin-right:2px"></div>
  </div>
</div>

<script src="https://cdn.jsdelivr.net/npm/bootstrap@5.3.0/dist/js/bootstrap.bundle.min.js"></script>
<script>
  // label, label width, layout: 1 = sort icon on the same line, 2 = icon on a second line, 0 = none
  const heads = [['ESTADO',60,1],['TOMO',45,1],['LOCALIDAD',87,2],['OFICINA',61,2],['TIPO',35,2],['PREDIO',57,2],['FOLIO',44,1],['TARJETA',63,2],['ARCHIVO',69,0],['REGISTRO',74,2],['ACTUALIZADO',108,2],['ACCIONES',76,0]];
  const sort = '<svg width="20" height="20" style="margin-right:1px"><use href="#sort"/></svg>';
  document.getElementById('heads').innerHTML = heads.map(([t, w, k]) =>
    `<th><div class="d-flex ${k === 2 ? 'flex-column align-items-end' : 'justify-content-between align-items-center'}"><span data-w="${w}" class="${k === 2 ? 'align-self-start' : ''}">${t}</span>${k ? sort : ''}</div></th>`).join('');

  const state = { d: ['Disponible', 'g', 92, 72], o: ['Ocupado', 'r', 80, 60], s: ['Solicitado', 'y', 86, 66] };
  const pill = (t, c, w, tw) => `<span class="pill ${c}" style="width:${w}px"><span data-w="${tw}">${t}</span></span>`;
  const si = pill('Si', 'g', 33, 12), no = pill('No', 'r', 39, 20), pdf = pill('PDF', 'r', 59, 29);
  const who = s => `<span class="strong-txt">${s}</span><br>`;
  const data = [
    ['d','N/A','1','101','1','257113','1',no,'N/A', who('Registrado<br>por:<br>Admin') + '09-09-<br>2022<br>14:16:09', who('Actualizado<br>por: Admin') + '09-09-2022<br>14:19:51'],
    ['d','46928127','7','101','2','91665','7',si,pdf,'06-09-<br>2022<br>14:05:01', who('Actualizado<br>por: Arturo') + '06-09-2022<br>15:15:03'],
    ['o','93','2','101','2','3470','981',no,'N/A','06-09-<br>2022<br>14:05:01','06-09-2022<br>14:05:01'],
    ['s','298573','1','101','1','59168','57',si,'N/A','06-09-<br>2022<br>14:05:01','06-09-2022<br>15:08:18'],
    ['','','','','','','','','','06-09-<br>&nbsp;<br>&nbsp;','06-09-2022<br>&nbsp;']
  ];
  const act = (c, w, icon, gap, label, tw) => `<div class="act ${c}" style="width:${w}px;padding-left:15px">${label ? `<svg width="20" height="20" style="margin-right:${gap}px"><use href="#${icon}"/></svg><span data-w="${tw}">${label}</span>` : ''}</div>`;
  const acts = on => `<div class="d-flex" style="gap:10px">${act('g', 146, 'eye', 10, on && 'Incidencias', 86)}${act('b', 111, 'edit', 15, on && 'Editar', 46)}${act('r', 130, 'trash', 15, on && 'Eliminar', 64)}</div>`;
  const cell = (c, i) => {
    if (i === 0) return `<td>${c ? pill(...state[c]) : ''}</td>`;
    if (i === 7) return `<td class="text-center">${c}</td>`;
    return c === pdf ? `<td>${c}</td>` : `<td class="plain">${c}</td>`;
  };
  document.getElementById('rows').innerHTML = data.map(r => '<tr>' + r.map(cell).join('') + `<td>${acts(r[0] !== '')}</td></tr>`).join('');

  // tracks each label so that it fills its given width
  document.querySelectorAll('[data-w]').forEach(el => {
    el.style.letterSpacing = '0px';
    const n = el.textContent.length, w = el.getBoundingClientRect().width;
    el.style.letterSpacing = ((el.dataset.w - w) / n).toFixed(3) + 'px';
  });
</script>
</body>
</html>
